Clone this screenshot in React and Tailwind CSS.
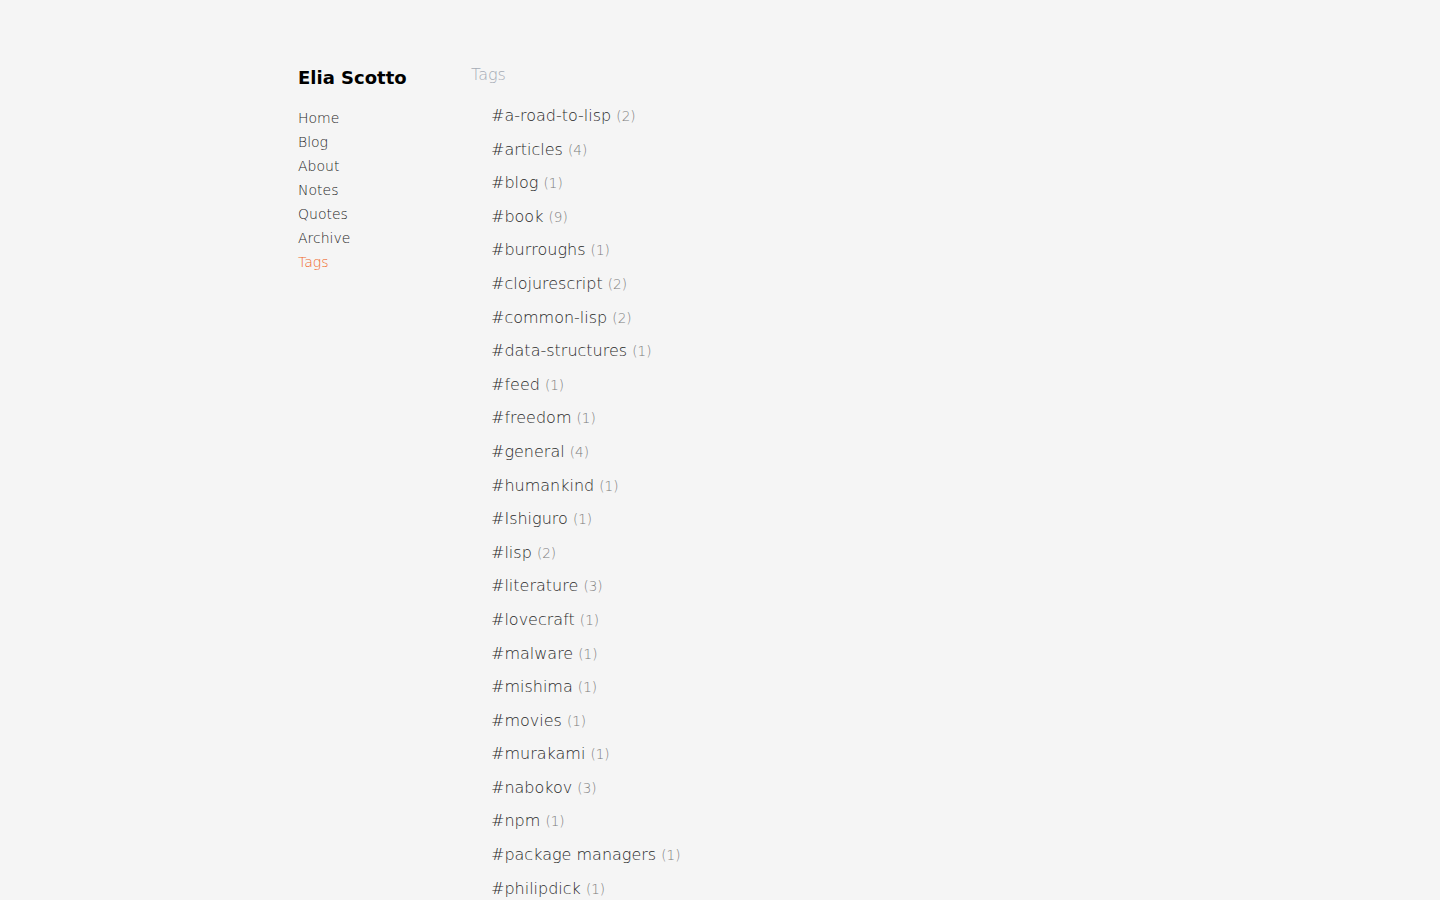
import React from "react";

const tags = [
  ["a-road-to-lisp", 2],
  ["articles", 4],
  ["blog", 1],
  ["book", 9],
  ["burroughs", 1],
  ["clojurescript", 2],
  ["common-lisp", 2],
  ["data-structures", 1],
  ["feed", 1],
  ["freedom", 1],
  ["general", 4],
  ["humankind", 1],
  ["Ishiguro", 1],
  ["lisp", 2],
  ["literature", 3],
  ["lovecraft", 1],
  ["malware", 1],
  ["mishima", 1],
  ["movies", 1],
  ["murakami", 1],
  ["nabokov", 3],
  ["npm", 1],
  ["package managers", 1],
  ["philipdick", 1],
  ["programming", 3],
  ["quotes", 1],
];

const nav = ["Home", "Blog", "About", "Notes", "Quotes", "Archive", "Tags"];

export default function App() {
  return (
    <div
      className="min-h-screen bg-[#f5f5f5]"
      style={{ fontFamily: '"DejaVu Sans", sans-serif' }}
    >
      <div className="mx-auto flex w-[844px] pt-[64px]">
        <aside className="w-[173px] shrink-0">
          <h1 className="text-[18px] font-bold leading-[28px] text-black">Elia Scotto</h1>
          <ul className="mt-[14px] font-light">
            {nav.map((n) => (
              <li
                key={n}
                className={
                  "text-[14px] leading-[24px] " +
                  (n === "Tags" ? "text-[#f06a2a]" : "text-[#262626]")
                }
              >
                {n}
              </li>
            ))}
          </ul>
        </aside>
        <main className="flex-1 -mt-[1px]">
          <h2 className="text-[16px] font-light leading-[24px] text-[#a6acb6]">Tags</h2>
          <ul className="mt-[12px] pl-[20px] font-light">
            {tags.map(([t, c]) => (
              <li
                key={t}
                className="h-[33.6px] whitespace-nowrap py-[4px] leading-[25.6px]"
              >
                <span className="text-[16px] text-[#2a2a2a]">#{t}</span>{" "}
                <span className="text-[13.5px] text-[#7c7c7c]">({c})</span>
              </li>
            ))}
          </ul>
        </main>
      </div>
    </div>
  );
}
